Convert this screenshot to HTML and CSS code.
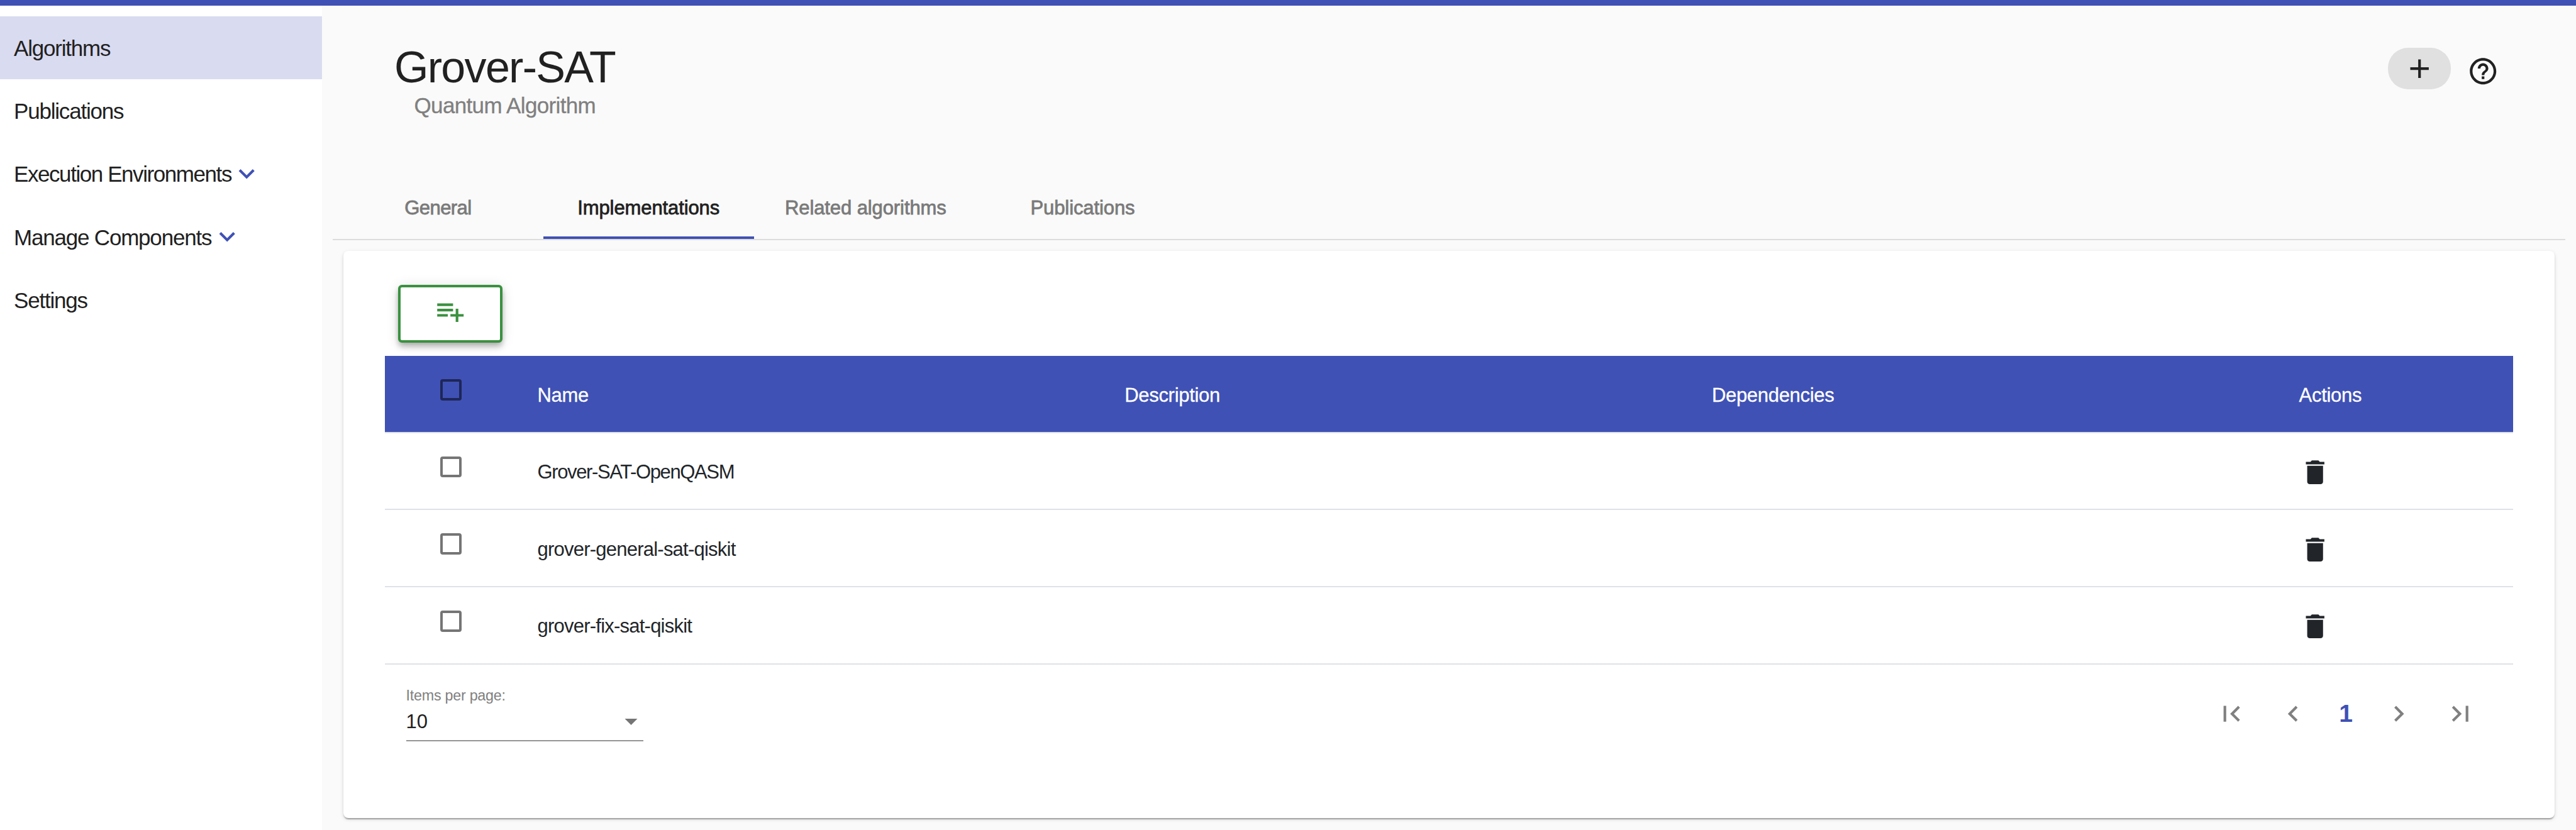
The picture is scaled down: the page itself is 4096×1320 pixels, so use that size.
FILE: index.html
```html
<!DOCTYPE html>
<html lang="en">
<head>
<meta charset="utf-8">
<title>Grover-SAT</title>
<link rel="stylesheet" href="styles.css">
</head>
<body>
<svg class="sprite" aria-hidden="true">
  <symbol id="expand" viewBox="0 0 24 24"><path d="M16.59 8.59L12 13.17 7.41 8.59 6 10l6 6 6-6z"/></symbol>
  <symbol id="trash" viewBox="0 0 24 24"><path d="M6 19c0 1.1.9 2 2 2h8c1.1 0 2-.9 2-2V7H6v12zM19 4h-3.5l-1-1h-5l-1 1H5v2h14V4z"/></symbol>
</svg>
<div class="topbar"></div>
<div class="shell">
  <nav class="sidebar">
    <a class="nav-item active">Algorithms</a>
    <a class="nav-item">Publications</a>
    <a class="nav-item"><span class="long">Execution Environments</span><svg class="icon"><use href="#expand"/></svg></a>
    <a class="nav-item"><span>Manage Components</span><svg class="icon"><use href="#expand"/></svg></a>
    <a class="nav-item">Settings</a>
  </nav>
  <main class="main">
    <header class="header">
      <div class="titles">
        <h1 class="title">Grover-SAT</h1>
        <p class="subtitle">Quantum Algorithm</p>
      </div>
      <div class="actions">
        <button class="pill"><svg class="icon" viewBox="0 0 24 24"><path d="M19 13h-6v6h-2v-6H5v-2h6V5h2v6h6v2z"/></svg></button>
        <svg class="icon help" viewBox="0 0 24 24"><path d="M11 18h2v-2h-2v2zm1-16C6.48 2 2 6.48 2 12s4.48 10 10 10 10-4.48 10-10S17.52 2 12 2zm0 18c-4.41 0-8-3.59-8-8s3.59-8 8-8 8 3.59 8 8-3.59 8-8 8zm0-14c-2.21 0-4 1.79-4 4h2c0-1.1.9-2 2-2s2 .9 2 2c0 2-3 1.75-3 5h2c0-2.25 3-2.5 3-5 0-2.21-1.79-4-4-4z"/></svg>
      </div>
    </header>
    <div class="tabs">
      <div class="tab short">General</div>
      <div class="tab selected">Implementations</div>
      <div class="tab wide">Related algorithms</div>
      <div class="tab">Publications</div>
    </div>
    <section class="card">
      <button class="add"><svg class="icon" viewBox="0 0 24 24"><path d="M14 10H2v2h12v-2zm0-4H2v2h12V6zm4 8v-4h-2v4h-4v2h4v4h2v-4h4v-2h-4zM2 16h8v-2H2v2z"/></svg></button>
      <div class="table">
        <div class="row head"><span class="check"></span><span>Name</span><span>Description</span><span>Dependencies</span><span>Actions</span></div>
        <div class="row"><span class="check"></span><span class="upper">Grover-SAT-OpenQASM</span><span></span><span></span><svg class="icon"><use href="#trash"/></svg></div>
        <div class="row"><span class="check"></span><span>grover-general-sat-qiskit</span><span></span><span></span><svg class="icon"><use href="#trash"/></svg></div>
        <div class="row"><span class="check"></span><span>grover-fix-sat-qiskit</span><span></span><span></span><svg class="icon"><use href="#trash"/></svg></div>
      </div>
      <footer class="paginator">
        <div class="page-size">
          <div class="label">Items per page:</div>
          <div class="select"><span>10</span><svg class="caret" viewBox="0 0 10 5"><path d="M0 0h10L5 5z"/></svg></div>
        </div>
        <div class="pager">
          <svg class="icon" viewBox="0 0 24 24"><path d="M18.41 16.59L13.82 12l4.59-4.59L17 6l-6 6 6 6zM6 6h2v12H6z"/></svg>
          <svg class="icon" viewBox="0 0 24 24"><path d="M15.41 7.41L14 6l-6 6 6 6 1.41-1.41L10.83 12z"/></svg>
          <span class="current">1</span>
          <svg class="icon" viewBox="0 0 24 24"><path d="M10 6L8.59 7.41 13.17 12l-4.58 4.59L10 18l6-6z"/></svg>
          <svg class="icon" viewBox="0 0 24 24"><path d="M5.59 7.41L10.18 12l-4.59 4.59L7 18l6-6-6-6zM16 6h2v12h-2z"/></svg>
        </div>
      </footer>
    </section>
  </main>
</div>
</body>
</html>
```
FILE: styles.css
```css
* { box-sizing: border-box; }

body {
  margin: 0;
  height: 1320px;
  overflow: hidden;
  background: #fafafa;
  color: #212121;
  font-family: "Liberation Sans", Arial, sans-serif;
}

.sprite { display: none; }

.icon {
  display: block;
  flex: none;
  width: 50.4px;
  height: 50.4px;
  fill: currentColor;
}

.topbar { height: 9px; background: #3f51b5; }

.shell { display: flex; height: 1311px; }

/* Side navigation */
.sidebar {
  flex: none;
  width: 512px;
  padding-top: 17px;
  background: #fff;
}

.nav-item {
  display: flex;
  align-items: center;
  height: 100.3px;
  padding: 1.5px 0 0 22px;
  font-size: 35px;
  letter-spacing: -1.2px;
  white-space: nowrap;
}

.nav-item.active { background: #d9dbf0; }
.nav-item .long { letter-spacing: -1.43px; }
.nav-item .icon { margin: 0 0 3px -0.5px; color: #3f51b5; }

/* Page header */
.main { flex: 1; min-width: 0; }

.header {
  display: flex;
  justify-content: space-between;
  height: 271px;
  padding: 57.5px 123px 0 115px;
}

.title {
  margin: 0;
  font-size: 70px;
  font-weight: 400;
  line-height: 80px;
  letter-spacing: -1.7px;
}

.subtitle {
  margin: 0 0 0 31.5px;
  font-size: 35px;
  line-height: 42px;
  letter-spacing: -0.65px;
  color: #808080;
  -webkit-text-stroke: 0.3px currentColor;
}

.actions { display: flex; align-items: flex-start; padding-top: 9px; }

.pill {
  display: flex;
  align-items: center;
  justify-content: center;
  width: 100px;
  height: 66.4px;
  margin-right: 25.4px;
  padding: 0;
  border: 0;
  border-radius: 32px;
  background: #e0e0e0;
  color: #212121;
}

.help { margin-top: 12px; }

/* Tabs */
.tabs {
  display: flex;
  height: 102px;
  margin: 0 17px;
  border-bottom: 2px solid #dcdcdc;
}

.tab {
  display: flex;
  align-items: center;
  justify-content: center;
  width: 334.8px;
  padding-top: 6px;
  border-bottom: 4px solid transparent;
  font-size: 31px;
  letter-spacing: -0.1px;
  color: #7a7a7a;
  -webkit-text-stroke: 0.8px currentColor;
}

.tab.short { letter-spacing: -0.6px; }
.tab.wide { width: 355.5px; }
.tab.selected { border-bottom-color: #3f51b5; color: #212121; }

/* Card */
.card {
  height: 901.5px;
  margin: 17px 33.7px 0 33.5px;
  padding: 54.3px 66.5px 0;
  border-radius: 8px;
  background: #fff;
  box-shadow: 0 4px 2px -2px rgba(0, 0, 0, .2), 0 2px 2px rgba(0, 0, 0, .14), 0 2px 6px rgba(0, 0, 0, .12);
}

.add {
  display: flex;
  align-items: center;
  justify-content: center;
  width: 166px;
  height: 92px;
  margin: 0 0 21px 21px;
  padding: 0 0 8px;
  border: 4px solid #3a913f;
  border-radius: 6px;
  background: #fff;
  color: #3a913f;
  box-shadow: 0 4px 8px -2px rgba(0, 0, 0, .2), 0 8px 10px rgba(0, 0, 0, .14), 0 2px 20px rgba(0, 0, 0, .12);
}

/* Table */
.row {
  display: grid;
  grid-template-columns: 242.5px repeat(3, 933.7px) 1fr;
  align-items: center;
  height: 122.6px;
  padding-top: 4px;
  border-bottom: 2px solid #dee2e6;
  font-size: 31px;
  letter-spacing: -0.77px;
  color: #212529;
}

.row .upper { letter-spacing: -1.38px; }

.row.head {
  background: #3f51b5;
  background-clip: padding-box;
  color: #fff;
  letter-spacing: -0.3px;
  -webkit-text-stroke: 0.3px currentColor;
}

.check {
  width: 33.6px;
  height: 33.6px;
  margin: 0 0 17px 88.4px;
  border: 4px solid #757575;
  border-radius: 4px;
}

.head .check { border-color: #1e2657; }

/* Paginator */
.paginator {
  display: flex;
  justify-content: space-between;
  padding: 35px 58.5px 0 33.6px;
}

.page-size { width: 377.5px; }

.label {
  font-size: 23.3px;
  line-height: 28px;
  letter-spacing: -0.25px;
  color: #808080;
}

.select {
  display: flex;
  align-items: center;
  justify-content: space-between;
  height: 59px;
  padding: 0 9px 1px 0;
  border-bottom: 2px solid #949494;
  font-size: 31px;
}

.caret { width: 21px; height: 10px; fill: #757575; }

.pager {
  display: flex;
  align-items: center;
  gap: 48px;
  height: 50.4px;
  margin-top: 18.5px;
  color: #808080;
}

.current {
  width: 117px;
  margin: 0 -48px;
  font-size: 39px;
  font-weight: 700;
  text-align: center;
  color: #3f51b5;
}
```
